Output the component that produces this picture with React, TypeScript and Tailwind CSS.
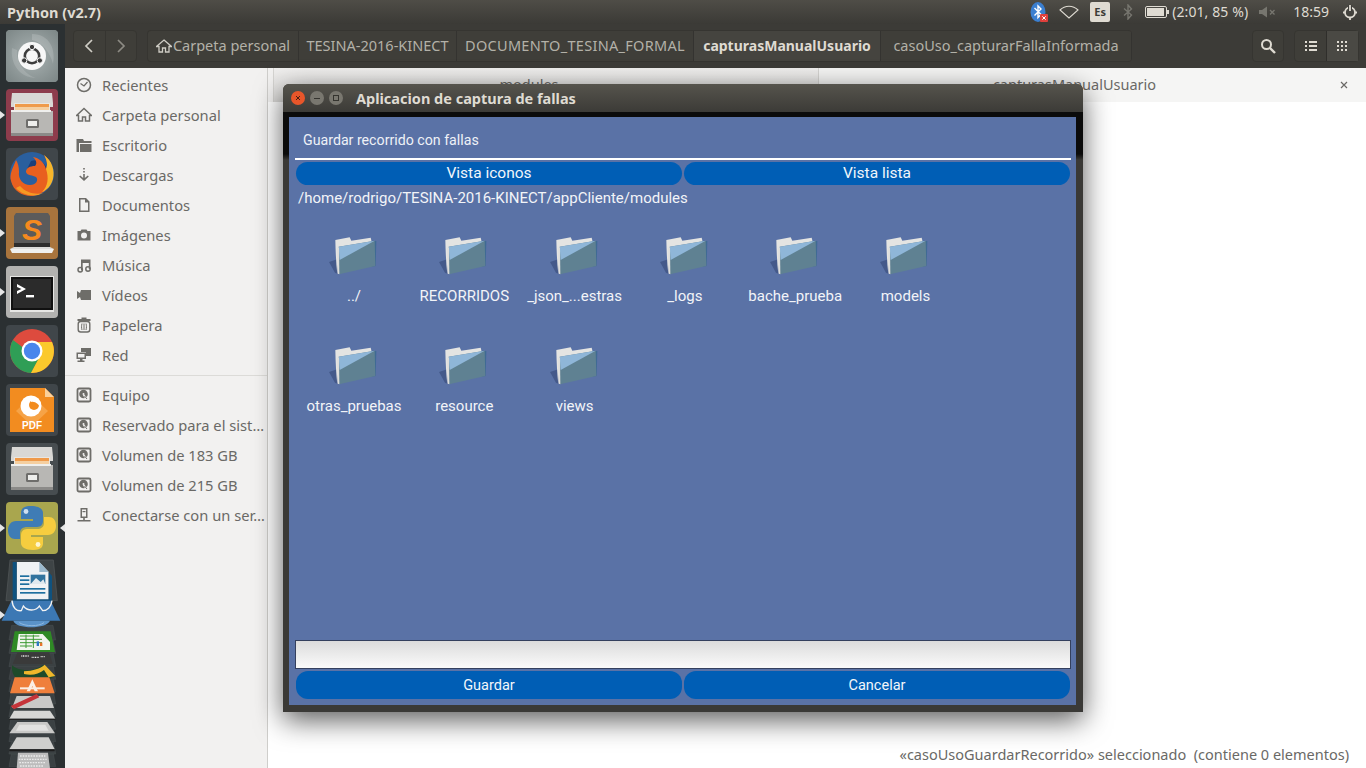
import React from "react";

const ui = "font-['Noto_Sans',sans-serif]";
const rb = "font-['Roboto',sans-serif]";

function FilesIcon() {
  return (
    <svg viewBox="0 0 52 52" className="w-[52px] h-[52px]">
      <path d="M6 4 h40 l1 10 v4 H5 v-4z" fill="#d9d8d5" />
      <rect x="8" y="14" width="36" height="8" fill="#e9e6e0" />
      <rect x="9" y="15" width="34" height="3" fill="#ef9a4a" />
      <rect x="9" y="18" width="34" height="3" fill="#f5cfa0" />
      <path d="M5 22 h42 v25 H5z" fill="#b8b7b4" />
      <path d="M5 21 h40 v2 H5z" fill="#efefed" />
      <rect x="5" y="44" width="42" height="3" fill="#8b8a88" />
      <rect x="20" y="30" width="13" height="9" rx="1.5" fill="#6e6d6b" />
      <rect x="22" y="32" width="9" height="5" fill="#eeeeec" />
    </svg>
  );
}

function UbuntuIcon() {
  return (
    <svg viewBox="0 0 52 52" className="w-[52px] h-[52px]">
      <defs>
        <radialGradient id="ub" cx="0.5" cy="0.5" r="0.7">
          <stop offset="0" stopColor="#aab3b3" />
          <stop offset="1" stopColor="#7c8686" />
        </radialGradient>
      </defs>
      <rect width="52" height="52" rx="4" fill="url(#ub)" />
      <path d="M26 4 C44 4 50 20 47 34 C44 22 36 12 26 10z" fill="#ffffff" opacity="0.16" />
      <path d="M6 18 C4 34 14 48 30 48 C18 44 10 32 11 20z" fill="#ffffff" opacity="0.14" />
      <circle cx="26" cy="26" r="14" fill="#f7f7f7" />
      <circle cx="26" cy="26" r="7.2" fill="none" stroke="#3d3d3d" strokeWidth="2.6" />
      <circle cx="26" cy="17" r="2.7" fill="#3d3d3d" stroke="#f7f7f7" strokeWidth="1" />
      <circle cx="18.2" cy="30.5" r="2.7" fill="#3d3d3d" stroke="#f7f7f7" strokeWidth="1" />
      <circle cx="33.8" cy="30.5" r="2.7" fill="#3d3d3d" stroke="#f7f7f7" strokeWidth="1" />
    </svg>
  );
}

function FirefoxIcon() {
  return (
    <svg viewBox="0 0 52 52" className="w-[52px] h-[52px]">
      <circle cx="26" cy="26" r="22" fill="#2a5f9e" />
      <path d="M25 13 C33 10 42 16 42 26 C42 34 34 40 26 38 C33 37 36 31 33 26 C30 22 23 24 21 21z" fill="#1d3f7a" />
      <path d="M10 12 C7 20 3 26 5 33 C8 46 22 50 31 47 C41 44 48 35 47 24 C46 15 42 10 38 7 C41 12 42 17 40 21 C38 14 33 10 27 9 C31 13 31 16 29 18 C24 18 20 20 20 24 C21 28 27 27 30 29 C33 32 30 37 24 37 C17 37 12 31 13 24 C13 19 12 15 10 12z" fill="#e8601f" />
      <path d="M38 7 C46 13 49 22 47 31 C45 38 41 42 36 44 C42 38 43 30 40 21 C42 17 41 12 38 7z" fill="#f7b52a" />
      <path d="M10 40 C16 47 28 50 37 45 C30 47 20 45 14 38z" fill="#f59a23" />
    </svg>
  );
}

function SublimeIcon() {
  return (
    <svg viewBox="0 0 52 52" className="w-[52px] h-[52px]">
      <path d="M10 6 h32 l2 3 v33 H8 V9z" fill="#5b5b5b" />
      <path d="M8 36 h36 v6 H8z" fill="#2e2e2e" />
      <path d="M4 42 h44 l-2 4 H6z" fill="#f0f0ee" />
      <path d="M8 40 h36 l4 2 H4z" fill="#dcdcda" />
      <text x="26" y="33" textAnchor="middle" fontFamily="Liberation Sans, sans-serif" fontStyle="italic" fontWeight="700" fontSize="30" fill="#f58a1f">S</text>
    </svg>
  );
}

function TerminalIcon() {
  return (
    <svg viewBox="0 0 52 52" className="w-[52px] h-[52px]">
      <rect x="4" y="10" width="44" height="36" fill="#e6e6e4" />
      <rect x="5" y="11" width="42" height="33" fill="#111" />
      <rect x="7" y="13" width="38" height="29" fill="#2b2b2b" />
      <path d="M11 18 l9 5 -9 5 v-3 l4.5 -2 -4.5 -2z" fill="#fff" />
      <rect x="20" y="29" width="8" height="2.4" fill="#fff" />
    </svg>
  );
}

function ChromeIcon() {
  return (
    <svg viewBox="0 0 52 52" className="w-[52px] h-[52px]">
      <circle cx="26" cy="26" r="22" fill="#dd4b3e" />
      <path d="M7 15 A22 22 0 0 0 25 48 L35 30 H26 A9 9 0 0 1 17.5 23z" fill="#2f9e56" />
      <path d="M26 17 H46 A22 22 0 0 1 25 48 L34 31 A9 9 0 0 0 26 17z" fill="#fbc92c" />
      <circle cx="26" cy="26" r="10.5" fill="#fff" />
      <circle cx="26" cy="26" r="8.2" fill="#4a86ec" />
    </svg>
  );
}

function FoxitIcon() {
  return (
    <svg viewBox="0 0 52 52" className="w-[52px] h-[52px]">
      <path d="M4 4 H39 L48 13 V48 H4z" fill="#f28c20" />
      <path d="M39 4 L48 13 H39z" fill="#fbd09a" />
      <path d="M26 12 L42 27 L26 42 L10 27z" fill="#f6a347" />
      <circle cx="25" cy="22" r="10.5" fill="#fff" />
      <circle cx="28" cy="21" r="5" fill="#f28c20" />
      <path d="M25 12 C31 13 36 18 35 25 C33 20 29 17 25 18z" fill="#fff" />
      <text x="26" y="45" textAnchor="middle" fontFamily="Liberation Sans, sans-serif" fontWeight="700" fontSize="10" fill="#fff">PDF</text>
    </svg>
  );
}

function PythonIcon() {
  return (
    <svg viewBox="0 0 52 52" className="w-[52px] h-[52px]">
      <path d="M25 4 C16 4 15 8 15 11 V17 H27 V19 H10 C5 19 2 23 2 28 C2 34 5 37 9 37 H14 V31 C14 27 17 25 21 25 H31 C35 25 37 22 37 19 V11 C37 7 33 4 25 4z" fill="#3f7cb5" />
      <path d="M27 48 C36 48 37 44 37 41 V35 H25 V33 H42 C47 33 50 29 50 24 C50 18 47 15 43 15 H38 V21 C38 25 35 27 31 27 H21 C17 27 15 30 15 33 V41 C15 45 19 48 27 48z" fill="#f6cd3f" />
      <circle cx="20" cy="9.5" r="2.4" fill="#cfe0f0" />
      <circle cx="32" cy="42.5" r="2.4" fill="#fff6cf" />
    </svg>
  );
}

function Tile({ bg, arrow, rightArrow, children }: { bg: string; arrow?: boolean; rightArrow?: boolean; children: React.ReactNode }) {
  return (
    <div className="relative w-[65px] h-[52px] pl-[6px] shrink-0">
      {arrow && <div className="absolute left-0 top-[22px] w-0 h-0 border-y-[4px] border-y-transparent border-l-[5px] border-l-[#e6e6e6]" />}
      {rightArrow && <div className="absolute right-[0px] top-[22px] w-0 h-0 border-y-[4px] border-y-transparent border-r-[5px] border-r-[#e6e6e6]" />}
      <div className={`w-[52px] h-[52px] rounded-[4px] overflow-hidden ${bg}`}>{children}</div>
    </div>
  );
}

function LauncherStack() {
  const ghost = (y: number, w = 70) => (
    <path d={`M${97 - w + 8} ${y} H${97 + w - 8} L${97 + w} ${y + 44} H${97 - w} Z`} fill="#3b4143" stroke="#4b5153" strokeWidth="1.5" />
  );
  return (
    <svg viewBox="0 201 195 633" className="w-[65px] h-[211px] shrink-0 block">
      {ghost(780)}{ghost(742)}{ghost(705)}{ghost(668)}{ghost(630)}{ghost(592)}{ghost(555)}{ghost(518)}{ghost(480)}{ghost(440)}{ghost(400)}
      <path d="M30 204 H160 L172 326 H18z" fill="#3e4446" stroke="#55595b" strokeWidth="2" />
      <path d="M50 210 H118 L146 240 V325 H50z" fill="#f0f2f4" />
      <path d="M38 210 H50 V322 H38z" fill="#0f527f" />
      <path d="M118 210 L146 240 H118z" fill="#9ab8cc" />
      <path d="M146 240 L156 252 V325 H146z" fill="#0f527f" />
      <path d="M38 322 H156 V330 H38z" fill="#124e78" />
      <rect x="60" y="250" width="28" height="5" fill="#1d6f9f" />
      <rect x="60" y="262" width="28" height="5" fill="#1d6f9f" />
      <rect x="60" y="274" width="28" height="5" fill="#1d6f9f" />
      <rect x="92" y="248" width="44" height="28" fill="#31739e" />
      <path d="M92 276 L108 258 L122 270 L130 262 L136 276z" fill="#dfe8ee" />
      <rect x="60" y="288" width="76" height="5" fill="#1d6f9f" />
      <rect x="60" y="300" width="76" height="5" fill="#1d6f9f" />
      <path d="M34 326 H152 L181 386 H5z" fill="#3c78b4" />
      <path d="M36 326 C38 348 50 358 64 356 L70 342 C82 358 108 358 118 342 L128 356 C142 356 154 344 156 326" fill="none" stroke="#f3f3f3" strokeWidth="4" />
      <path d="M40 386 C46 412 140 412 150 386z" fill="#5b93c8" />
      <path d="M58 392 C76 404 116 404 132 392" fill="none" stroke="#8fb8de" strokeWidth="3" />
      <path d="M44 418 H152 L165 480 H33z" fill="#2f8a25" />
      <path d="M56 426 H128 L150 450 V474 H50z" fill="#f2f5ef" />
      <path d="M60 432 h58 M60 442 h66 M60 452 h66 M60 462 h36 M78 428 v40 M100 428 v40" stroke="#3d9a33" strokeWidth="3" fill="none" />
      <rect x="110" y="448" width="7" height="14" fill="#2f78c4" />
      <rect x="120" y="452" width="7" height="10" fill="#e8742a" />
      <path d="M52 482 H148 L158 516 H38z" fill="#3a3a3a" />
      <path d="M64 492 h22 M95 496 h22 M122 494 h12" stroke="#e8e8e8" strokeWidth="4" strokeDasharray="3 2" />
      <path d="M36 520 C60 540 100 540 130 518 L166 552 L150 560 H50 C40 552 34 536 36 520z" fill="#1e4a2a" />
      <path d="M72 538 C100 536 120 530 134 518 L166 552 L146 556 L132 534 C116 546 96 552 72 546z" fill="#f0b72b" />
      <path d="M44 556 H148 L164 604 H30z" fill="#ef7f3b" />
      <path d="M97 562 L114 598 H104 L97 582 L90 598 H80z" fill="#fbeee4" />
      <path d="M60 586 H134 V592 H60z" fill="#fbeee4" />
      <path d="M50 612 H150 L162 648 H36z" fill="#c9c9c7" />
      <path d="M32 642 L110 606 L118 616 L42 652z" fill="#c5343a" />
      <path d="M42 656 H150 L166 680 H28z" fill="#d6d6d4" />
      <path d="M28 680 H166 V684 H28z" fill="#222" />
      <path d="M52 690 H142 L165 724 H28z" fill="#c8c8c6" />
      <path d="M58 698 H136 L146 716 H48z" fill="#e2e2e0" />
      <path d="M50 736 H146 L164 772 H28z" fill="#cfcfcd" />
      <path d="M28 772 H164 V778 H28z" fill="#1d1d1d" />
      <path d="M54 782 H144 L150 830 H50z" fill="#bcbcbc" />
      <path d="M60 792 h76 M56 802 h84 M58 812 h80 M60 822 h72" stroke="#eaeaea" strokeWidth="4" strokeDasharray="5 3" />
    </svg>
  );
}

function Launcher() {
  return (
    <div className="w-[65px] shrink-0 h-[744px] bg-[#2b3032] flex flex-col overflow-hidden pt-[6px] gap-[7px]">
      <Tile bg="bg-[#87908f]"><UbuntuIcon /></Tile>
      <Tile bg="bg-[#8d3c4c]" arrow><FilesIcon /></Tile>
      <Tile bg="bg-[#40464a]"><FirefoxIcon /></Tile>
      <Tile bg="bg-[#a8743d]" arrow><SublimeIcon /></Tile>
      <Tile bg="bg-[#b2b2b0]" arrow><TerminalIcon /></Tile>
      <Tile bg="bg-[#40464a]"><ChromeIcon /></Tile>
      <Tile bg="bg-[#40464a]"><FoxitIcon /></Tile>
      <Tile bg="bg-[#474d50]"><FilesIcon /></Tile>
      <Tile bg="bg-[#a9a64e]" arrow rightArrow><PythonIcon /></Tile>
      <div className="relative -mt-[2px]">
        <LauncherStack />
        <div className="absolute left-0 top-[52px] w-0 h-0 border-y-[4px] border-y-transparent border-l-[5px] border-l-[#e6e6e6]" />
      </div>
    </div>
  );
}

function TopBar() {
  return (
    <div className="h-[24px] shrink-0 bg-gradient-to-b from-[#4f4d47] to-[#3b3a36] flex items-center pl-[7px] pr-[8px] text-[#dfdbd2]">
      <span className={`${ui} text-[14.5px] font-bold leading-none`}>Python (v2.7)</span>
      <div className="ml-auto flex items-center h-full">
        <svg width="18" height="22" viewBox="0 0 18 22" className="mr-[11px]">
          <ellipse cx="8" cy="11" rx="7.5" ry="10" fill="#3b7fd0" />
          <path d="M4.5 7 L11 13.5 L8 16.5 V5 L11 8 L4.5 14.5" fill="none" stroke="#fff" strokeWidth="1.4" />
          <rect x="10" y="13" width="8" height="8" rx="1" fill="#e0403c" />
          <path d="M12.3 15.3 l3.4 3.4 m0 -3.4 l-3.4 3.4" stroke="#fff" strokeWidth="1" />
        </svg>
        <svg width="20" height="14" viewBox="0 0 20 14" className="mr-[11px]">
          <path d="M1 5 C6 0 14 0 19 5 L10 13z" fill="none" stroke="#dfdbd2" strokeWidth="1.1" />
        </svg>
        <div className="w-[20px] h-[20px] bg-[#dfdbd2] rounded-[2px] flex items-center justify-center text-[#3c3b37] font-['Noto_Sans',sans-serif] text-[11px] font-bold mr-[13px]">Es</div>
        <svg width="10" height="16" viewBox="0 0 10 16" className="mr-[12px]">
          <path d="M1 4.5 L8.5 11 L5 15 V1 L8.5 5 L1 11.5" fill="none" stroke="#77766f" strokeWidth="1.4" />
        </svg>
        <svg width="24" height="12" viewBox="0 0 24 12" className="mr-[3px]">
          <rect x="0.5" y="0.5" width="21" height="11" rx="1.5" fill="none" stroke="#dfdbd2" />
          <rect x="2" y="2" width="17" height="8" fill="#dfdbd2" />
          <rect x="22" y="4" width="2" height="4" fill="#dfdbd2" />
        </svg>
        <span className={`${ui} text-[14px] leading-none tracking-[0.1px] mr-[11px]`}>(2:01, 85 %)</span>
        <svg width="18" height="12" viewBox="0 0 18 12" className="mr-[16px]">
          <path d="M0 4 H3 L8 0.5 V11.5 L3 8 H0z" fill="#77766f" />
          <path d="M11 4 l4.5 4.5 m0 -4.5 l-4.5 4.5" stroke="#77766f" strokeWidth="1.3" />
        </svg>
        <span className={`${ui} text-[14px] leading-none mr-[13px]`}>18:59</span>
        <svg width="16" height="16" viewBox="0 0 16 16">
          <circle cx="8" cy="8.5" r="5" fill="none" stroke="#dfdbd2" strokeWidth="1.8" />
          <path d="M8 1 V7" stroke="#3f3e3a" strokeWidth="4" />
          <path d="M8 1 V7" stroke="#dfdbd2" strokeWidth="1.8" />
          <path d="M8 13 v3 M1 8.5 h2 M13 8.5 h2" stroke="#dfdbd2" strokeWidth="1.8" />
        </svg>
      </div>
    </div>
  );
}

function Crumb({ w, active, children }: { w: string; active?: boolean; children: React.ReactNode }) {
  return (
    <div className={`${w} shrink-0 h-full flex items-center justify-center pb-[1px] border-r border-[#343330] ${active ? "bg-[#45443f] text-[#dfdbd2] font-bold text-[14px]" : "text-[#b3b1a8] text-[14.5px]"}`}>
      {children}
    </div>
  );
}

function Toolbar() {
  return (
    <div className={`${ui} h-[44px] shrink-0 bg-[#3c3b37] flex items-center pl-[8px] pr-[7px]`}>
      <div className="w-[64px] h-[32px] rounded-[4px] border border-[#363531] bg-[#3f3e39] flex">
        <div className="flex-1 flex items-center justify-center border-r border-[#363531]">
          <svg width="10" height="14" viewBox="0 0 10 14"><path d="M8 1 L2 7 L8 13" fill="none" stroke="#cfcdc5" strokeWidth="1.7" /></svg>
        </div>
        <div className="flex-1 flex items-center justify-center">
          <svg width="10" height="14" viewBox="0 0 10 14"><path d="M2 1 L8 7 L2 13" fill="none" stroke="#8d8b84" strokeWidth="1.7" /></svg>
        </div>
      </div>
      <div className="ml-[10px] h-[32px] flex rounded-[4px] border border-[#363531] border-r-0 bg-[#3f3e39] overflow-hidden">
        <Crumb w="w-[151px]">
          <svg width="16" height="14" viewBox="0 0 16 14" className="mr-[1px]"><path d="M8 1 L15.5 7.5 H13 V13 H9.5 V9 H6.5 V13 H3 V7.5 H0.5z" fill="none" stroke="#cfcdc5" strokeWidth="1.3" /></svg>
          <span>Carpeta personal</span>
        </Crumb>
        <Crumb w="w-[158px]">TESINA-2016-KINECT</Crumb>
        <Crumb w="w-[237px] tracking-[0.3px]">DOCUMENTO_TESINA_FORMAL</Crumb>
        <Crumb w="w-[187px]" active>capturasManualUsuario</Crumb>
        <Crumb w="w-[251px]">casoUso_capturarFallaInformada</Crumb>
      </div>
      <div className="ml-auto w-[32px] h-[32px] rounded-[4px] border border-[#363531] bg-[#3f3e39] flex items-center justify-center">
        <svg width="16" height="16" viewBox="0 0 16 16"><circle cx="6.5" cy="6.5" r="4.5" fill="none" stroke="#dfdbd2" strokeWidth="2" /><path d="M10 10 L15 15" stroke="#dfdbd2" strokeWidth="2.4" /></svg>
      </div>
      <div className="ml-[10px] w-[65px] h-[32px] rounded-[4px] border border-[#363531] bg-[#3f3e39] flex">
        <div className="flex-1 flex items-center justify-center border-r border-[#2f2e2b]">
          <svg width="12" height="10" viewBox="0 0 12 10" fill="#dfdbd2"><rect width="2" height="2" /><rect x="4" width="8" height="2" /><rect y="4" width="2" height="2" /><rect x="4" y="4" width="8" height="2" /><rect y="8" width="2" height="2" /><rect x="4" y="8" width="8" height="2" /></svg>
        </div>
        <div className="flex-1 flex items-center justify-center bg-[#4a4944]">
          <svg width="11" height="11" viewBox="0 0 11 11" fill="#dfdbd2">
            {[0, 4, 8].map((x) => [0, 4, 8].map((y) => <rect key={`${x}${y}`} x={x} y={y} width="2" height="2" />))}
          </svg>
        </div>
      </div>
    </div>
  );
}

const G = "#6e6d69";
const sideIcons: Record<string, React.ReactNode> = {
  clock: <><circle cx="8" cy="8" r="6.5" fill="none" stroke={G} strokeWidth="1.5" /><path d="M4.5 6.5 L8 9 L11.5 5" fill="none" stroke={G} strokeWidth="1.3" /></>,
  home: <path d="M8 1.5 L15.5 8.5 H13.5 V14 H9.5 V10 H6.5 V14 H2.5 V8.5 H0.5z" fill="none" stroke={G} strokeWidth="1.5" />,
  folder: <path d="M0.5 2 H7 L8 4 H15.5 V6 H3 V15 H0.5z M4 7 H15.5 V15 H4z" fill={G} />,
  down: <path d="M7.2 1 h1.6 v1.5 h-1.6z M7.2 4 h1.6 v1.5 h-1.6z M7.2 7 h1.6 v4 l3 -2.6 1 1 L8 14 3.2 9.4 l1 -1 3 2.6z" fill={G} />,
  doc: <path d="M3 1 H10 L13.5 4.5 V15 H3z M4.5 2.5 V13.5 H12 V5.5 H9 V2.5z" fill={G} fillRule="evenodd" />,
  cam: <path d="M5.5 2.5 H10.5 L11.5 4 H14.5 V13.5 H1.5 V4 H4.5z M8 5.5 A3 3 0 1 0 8 11.5 A3 3 0 1 0 8 5.5z" fill={G} fillRule="evenodd" />,
  music: <><path d="M5 2.5 H14.5 V12 H12.8 V6 H6.7 V13 H5z" fill={G} /><circle cx="4.2" cy="12.8" r="2.2" fill="none" stroke={G} strokeWidth="1.5" /><circle cx="12" cy="12" r="2.2" fill="none" stroke={G} strokeWidth="1.5" /></>,
  video: <path d="M5 3 H15 V13 H5 L4 10 L1 12 V4 L4 6z" fill={G} />,
  trash: <><path d="M1.5 2 H14.5 V4 H1.5z M5.5 .5 H10.5 V2 H5.5z" fill={G} /><rect x="2.2" y="4.5" width="11.6" height="10.5" rx="2.5" fill="none" stroke={G} strokeWidth="1.4" /><path d="M6 6.5 C5.4 9 5.4 10.5 6 13 M8 6.5 V13 M10 6.5 C10.6 9 10.6 10.5 10 13" fill="none" stroke={G} strokeWidth="1" /></>,
  net: <><path d="M5 1 H15 V9 H10 V5 H5z" fill={G} /><path d="M0.5 5.5 H10 V12 H6.5 V13.5 H8.5 V15 H1.5 V13.5 H4 V12 H0.5z M2 7 V10.5 H8.5 V7z" fill={G} fillRule="evenodd" /></>,
  disk: <><rect x="1.5" y="1.5" width="13" height="13" rx="1.5" fill="none" stroke={G} strokeWidth="1.8" /><circle cx="7.5" cy="7" r="4.3" fill={G} /><circle cx="7.5" cy="7" r="1" fill="#f2f1f0" /><path d="M7.5 8 L11 12" stroke="#f2f1f0" strokeWidth="1.6" /><path d="M8.5 9 L11 12" stroke={G} strokeWidth="1" /></>,
  server: <><path d="M4.5 1 H11.5 V11 H4.5z M6 2.5 V9.5 H10 V2.5z" fill={G} fillRule="evenodd" /><rect x="6.5" y="4" width="3" height="1.2" fill={G} /><path d="M7.2 11 h1.6 v2 H14.5 v1.5 H1.5 V13 H7.2z" fill={G} /></>,
};

function SideRow({ icon, label }: { icon: string; label: string }) {
  return (
    <div className="h-[30px] flex items-center pl-[11px]">
      <svg width="16" height="16" viewBox="0 0 16 16" className="shrink-0">{sideIcons[icon]}</svg>
      <span className="ml-[10px] text-[14.7px] text-[#6a6966] whitespace-nowrap">{label}</span>
    </div>
  );
}

function Sidebar() {
  return (
    <div className={`${ui} w-[203px] shrink-0 bg-[#f2f1f0] border-r border-[#cfcecb] pt-[2px] overflow-hidden`}>
      <SideRow icon="clock" label="Recientes" />
      <SideRow icon="home" label="Carpeta personal" />
      <SideRow icon="folder" label="Escritorio" />
      <SideRow icon="down" label="Descargas" />
      <SideRow icon="doc" label="Documentos" />
      <SideRow icon="cam" label="Imágenes" />
      <SideRow icon="music" label="Música" />
      <SideRow icon="video" label="Vídeos" />
      <SideRow icon="trash" label="Papelera" />
      <SideRow icon="net" label="Red" />
      <div className="h-px bg-[#dcdbd8] mt-[5px] mb-[4px]" />
      <SideRow icon="disk" label="Equipo" />
      <SideRow icon="disk" label="Reservado para el sist…" />
      <SideRow icon="disk" label="Volumen de 183 GB" />
      <SideRow icon="disk" label="Volumen de 215 GB" />
      <SideRow icon="server" label="Conectarse con un ser…" />
    </div>
  );
}

function Content() {
  return (
    <div className={`${ui} flex-1 flex flex-col bg-white min-w-0`}>
      <div className="h-[34px] shrink-0 flex bg-[#f2f1f0] pl-[5px] text-[14.5px] text-[#6a6966]">
        <div className="w-[546px] border-l border-r border-[#d5d4d1] bg-gradient-to-b from-[#f0efee] to-[#dcdbd9] flex items-center justify-center pb-[1px] pr-[34px]">modules</div>
        <div className="flex-1 relative bg-[#f5f5f4] rounded-t-[3px] flex items-center justify-center pb-[1px] pr-[36px]">
          capturasManualUsuario
          <svg width="8" height="8" viewBox="0 0 8 8" className="absolute right-[18px] top-[13px]"><path d="M1 1 L7 7 M7 1 L1 7" stroke="#6a6966" strokeWidth="1.2" /></svg>
        </div>
      </div>
      <div className="flex-1 flex items-end justify-end pr-[17px] pb-[2px] text-[14.5px] text-[#6a6966] whitespace-pre">
        «casoUsoGuardarRecorrido» seleccionado  (contiene 0 elementos)
      </div>
    </div>
  );
}

function Folder() {
  return (
    <svg viewBox="85 50 150 132" className="w-[50px] h-[44px] -ml-[2px]">
      <path d="M88 128 L117 118 V165 L106 160z" fill="#44598a" />
      <path d="M107 62 L150 54 L155 64 L213 55 L217 70 L118 90 L113 165 Q108 120 107 62z" fill="#e4e4e2" />
      <path d="M215 64 L230 65 L228 140 L215 142z" fill="#3f6a94" />
      <path d="M117 82 L225 64 L227 140 L118 165z" fill="#5f8192" />
      <path d="M117 82 L225 64 L120 122z" fill="#8fb6d8" />
      <path d="M113 86 L118 84 L119 165 L114 163z" fill="#dededc" />
    </svg>
  );
}

function FolderItem({ label }: { label: string }) {
  return (
    <div className="w-[110px] h-[110px] flex flex-col items-center pt-[12px]">
      <Folder />
      <span className="mt-[6px] text-[15px] text-[#f2f4f8] whitespace-nowrap leading-[20px]">{label}</span>
    </div>
  );
}

function Pill({ big, children }: { big?: boolean; children: React.ReactNode }) {
  return <div className={`flex-1 rounded-[12px] bg-[#005eb5] flex items-center justify-center text-[#f2f6fb] ${big ? "text-[15.5px]" : "text-[14.5px] pt-[2px]"}`}>{children}</div>;
}

function Dialog() {
  return (
    <div className="absolute left-[283px] top-[84px] w-[800px] h-[628px] rounded-t-[6px] flex flex-col bg-[#3a3936] shadow-[0_8px_28px_rgba(0,0,0,0.65)]">
      <div className="h-[28px] shrink-0 rounded-t-[6px] bg-gradient-to-b from-[#56544d] to-[#3c3b37] flex items-center pl-[8px]">
        <div className="w-[14px] h-[14px] rounded-full bg-[#e8562a] flex items-center justify-center">
          <svg width="6" height="6" viewBox="0 0 6 6"><path d="M1 1 L5 5 M5 1 L1 5" stroke="#4a2010" strokeWidth="1" /></svg>
        </div>
        <div className="ml-[5px] w-[14px] h-[14px] rounded-full bg-[#79776f] flex items-center justify-center"><div className="w-[6px] h-px bg-[#35342f]" /></div>
        <div className="ml-[5px] w-[14px] h-[14px] rounded-full bg-[#79776f] flex items-center justify-center"><div className="w-[6px] h-[6px] border border-[#35342f]" /></div>
        <span className={`${ui} ml-[13px] pt-[2px] text-[14.5px] font-bold text-[#dfdbd2]`}>Aplicacion de captura de fallas</span>
      </div>
      <div className="flex-1 flex flex-col pt-[5px] pb-[7px] pl-[6px] pr-[7px] min-h-0 bg-gradient-to-b from-[#0b0b0b] from-[7%] to-[#3a3936] to-[8%]">
        <div className={`${rb} flex-1 bg-[#5a72a6] flex flex-col pl-[6px] pr-[5px] pb-[6px] min-h-0`}>
          <div className="h-[41px] shrink-0 flex items-end pl-[8px] pb-[7px] text-[14.2px] text-[#eef1f7]">Guardar recorrido con fallas</div>
          <div className="h-[2px] shrink-0 bg-white" />
          <div className="h-[23px] mt-[2px] shrink-0 flex gap-[2px] px-px"><Pill big>Vista iconos</Pill><Pill big>Vista lista</Pill></div>
          <div className="h-[26px] shrink-0 pl-[3px] pt-[1px] flex items-center text-[15px] text-[#f2f4f8]">/home/rodrigo/TESINA-2016-KINECT/appCliente/modules</div>
          <div className="flex-1 min-h-0 pt-[13px] pl-[4px]">
            <div className="grid grid-cols-[repeat(6,110.3px)]">
              {["../", "RECORRIDOS", "_json_...estras", "_logs", "bache_prueba", "models", "otras_pruebas", "resource", "views"].map((l) => (
                <FolderItem key={l} label={l} />
              ))}
            </div>
          </div>
          <div className="h-[29px] shrink-0 border border-[#34405e] bg-gradient-to-b from-[#dcdcdc] to-[#fafafa]" />
          <div className="h-[28px] mt-[2px] shrink-0 flex gap-[2px] px-px"><Pill>Guardar</Pill><Pill>Cancelar</Pill></div>
        </div>
      </div>
    </div>
  );
}

export default function App() {
  return (
    <div className="relative w-[1366px] h-[768px] overflow-hidden flex flex-col bg-[#3c3b37]">
      <TopBar />
      <div className="flex-1 flex min-h-0">
        <Launcher />
        <div className="flex-1 flex flex-col min-w-0">
          <Toolbar />
          <div className="flex-1 flex min-h-0">
            <Sidebar />
            <Content />
          </div>
        </div>
      </div>
      <Dialog />
    </div>
  );
}
